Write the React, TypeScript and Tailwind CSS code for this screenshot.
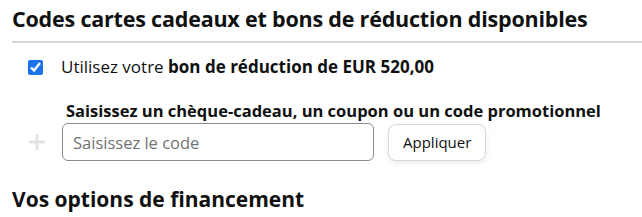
export default function App() {
  return (
    <div className="w-[642px] h-[217px] bg-white text-[#0f1111] font-['Open_Sans',sans-serif] overflow-hidden">
      {/* Gift cards / vouchers */}
      <div className="pl-3 pt-[4px]">
        <h2 className="text-[21.5px] leading-[30px] font-bold tracking-[-0.2px]">
          Codes cartes cadeaux et bons de réduction disponibles
        </h2>
        <div className="mt-[7px] h-[2px] bg-[#d5d9d9]" />

        <label className="mt-[14px] ml-4 flex items-center gap-[18px] text-[17px] leading-5">
          <input
            type="checkbox"
            defaultChecked
            className="w-[15px] h-[15px] accent-[#1a73e8]"
          />
          <span>
            Utilisez votre <b>bon de réduction de EUR 520,00</b>
          </span>
        </label>

        <div className="mt-[24px] ml-[54px] text-[16.5px] leading-5 font-bold">
          Saisissez un chèque-cadeau, un coupon ou un code promotionnel
        </div>

        <div className="mt-[2px] flex items-center">
          <div className="w-[50px] flex pl-[16px]">
            <svg width="18" height="18" viewBox="0 0 18 18">
              <path d="M9 1v16M1 9h16" stroke="#e1e3e3" strokeWidth="3" />
            </svg>
          </div>
          <input
            placeholder="Saisissez le code"
            className="w-[312px] h-[38px] rounded-md border border-[#888c8c] px-[10px] text-[16.5px] placeholder:text-[#6f7373] outline-none"
          />
          <button className="ml-[14px] h-[37px] px-[14px] rounded-[8px] border border-[#d5d9d9] bg-white text-[15px] shadow-[0_2px_5px_rgba(213,217,217,0.5)]">
            Appliquer
          </button>
        </div>

        <h2 className="mt-[24px] text-[21px] leading-7 font-bold">Vos options de financement</h2>
      </div>
    </div>
  )
}
